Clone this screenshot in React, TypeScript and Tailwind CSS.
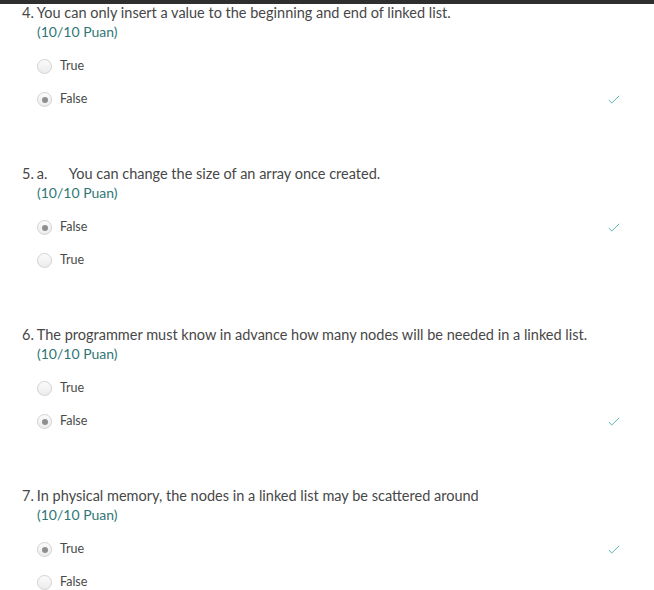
import React from "react";

type Opt = { label: string; checked: boolean; correct?: boolean };
type Q = { num: string; prefix?: string; text: string; opts: Opt[] };

const questions: Q[] = [
  {
    num: "4.",
    text: "You can only insert a value to the beginning and end of linked list.",
    opts: [
      { label: "True", checked: false },
      { label: "False", checked: true, correct: true },
    ],
  },
  {
    num: "5.",
    prefix: "a.",
    text: "You can change the size of an array once created.",
    opts: [
      { label: "False", checked: true, correct: true },
      { label: "True", checked: false },
    ],
  },
  {
    num: "6.",
    text: "The programmer must know in advance how many nodes will be needed in a linked list.",
    opts: [
      { label: "True", checked: false },
      { label: "False", checked: true, correct: true },
    ],
  },
  {
    num: "7.",
    text: "In physical memory, the nodes in a linked list may be scattered around",
    opts: [
      { label: "True", checked: true, correct: true },
      { label: "False", checked: false },
    ],
  },
];

function Radio({ checked }: { checked: boolean }) {
  return (
    <span className="flex h-[15px] w-[15px] items-center justify-center rounded-full border border-[#d2d2d2] bg-gradient-to-b from-[#fbfbfb] to-[#ececec]">
      {checked && <span className="h-[6px] w-[6px] rounded-full bg-[#8f8f8f]" />}
    </span>
  );
}

function Check() {
  return (
    <svg width="12" height="9" viewBox="0 0 12 9" fill="none">
      <path d="M0.8 5.2 L3.8 8 L11.2 0.8" stroke="#55b5b5" strokeWidth="1" />
    </svg>
  );
}

export default function App() {
  return (
    <div
      className="min-h-[590px] w-[654px] bg-white"
      style={{ fontFamily: "Lato, 'Noto Sans', sans-serif" }}
    >
      <div className="h-[4px] bg-[#2f2f2f]" />
      <div className="flex flex-col gap-[49px]">
        {questions.map((q, i) => (
          <div key={i} className="flex flex-col">
            <div className="flex h-[18px] items-center pl-[22px] text-[14.5px] text-[#474747]">
              <span className="mr-[3px]">{q.num}</span>
              {q.prefix && <span className="w-[32px]">{q.prefix}</span>}
              <span className="whitespace-pre">{q.text}</span>
            </div>
            <div className="flex h-[18px] items-center pl-[37px] text-[14px] text-[#2f7676]">
              (10/10 Puan)
            </div>
            <div className="mt-[10px] flex flex-col">
              {q.opts.map((o, j) => (
                <div key={j} className="flex h-[33px] items-center justify-between pl-[37px] pr-[34px]">
                  <div className="flex items-center gap-[8px]">
                    <Radio checked={o.checked} />
                    <span className="text-[12.5px] text-[#4a4a4a]">{o.label}</span>
                  </div>
                  {o.correct && <Check />}
                </div>
              ))}
            </div>
          </div>
        ))}
      </div>
    </div>
  );
}
